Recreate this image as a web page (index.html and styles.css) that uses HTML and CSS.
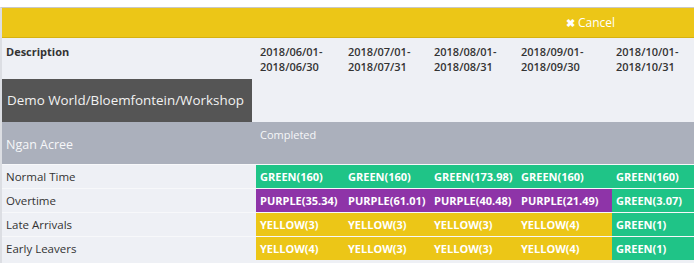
FILE: index.html
```html
<!DOCTYPE html>
<html lang="en">
<head>
  <meta charset="UTF-8">
  <meta name="viewport" content="width=device-width, initial-scale=1.0">
  <title>Timesheet Report</title>
  <link rel="stylesheet" href="styles.css">
</head>
<body>
  <div class="panel">
    <div class="toolbar">
      <span class="cancel"><span class="cancel-icon">&#10006;</span> Cancel</span>
    </div>
    <div class="report">
      <div class="row head-row">
        <div class="cell desc-head">Description</div>
        <div class="cell">2018/06/01-<br>2018/06/30</div>
        <div class="cell">2018/07/01-<br>2018/07/31</div>
        <div class="cell">2018/08/01-<br>2018/08/31</div>
        <div class="cell">2018/09/01-<br>2018/09/30</div>
        <div class="cell">2018/10/01-<br>2018/10/31</div>
      </div>
      <div class="row site-row">
        <div class="site">Demo World/Bloemfontein/Workshop</div>
      </div>
      <div class="row person-row">
        <div class="cell person">Ngan Acree</div>
        <div class="cell status">Completed</div>
      </div>
      <div class="row data-row">
        <div class="cell label">Normal Time</div>
        <div class="cell green">GREEN(160)</div>
        <div class="cell green">GREEN(160)</div>
        <div class="cell green">GREEN(173.98)</div>
        <div class="cell green">GREEN(160)</div>
        <div class="cell green">GREEN(160)</div>
      </div>
      <div class="row data-row">
        <div class="cell label">Overtime</div>
        <div class="cell purple">PURPLE(35.34)</div>
        <div class="cell purple">PURPLE(61.01)</div>
        <div class="cell purple">PURPLE(40.48)</div>
        <div class="cell purple">PURPLE(21.49)</div>
        <div class="cell green">GREEN(3.07)</div>
      </div>
      <div class="row data-row">
        <div class="cell label">Late Arrivals</div>
        <div class="cell yellow">YELLOW(3)</div>
        <div class="cell yellow">YELLOW(3)</div>
        <div class="cell yellow">YELLOW(3)</div>
        <div class="cell yellow">YELLOW(4)</div>
        <div class="cell green">GREEN(1)</div>
      </div>
      <div class="row data-row">
        <div class="cell label">Early Leavers</div>
        <div class="cell yellow">YELLOW(4)</div>
        <div class="cell yellow">YELLOW(3)</div>
        <div class="cell yellow">YELLOW(3)</div>
        <div class="cell yellow">YELLOW(4)</div>
        <div class="cell green">GREEN(1)</div>
      </div>
    </div>
  </div>
</body>
</html>
```

FILE: styles.css
```css
html, body {
  margin: 0;
  padding: 0;
  background: #fff;
  font-family: 'Open Sans', 'Liberation Sans', sans-serif;
  color: #333;
}

.panel {
  margin-top: 7px;
  border-top: 1px solid #c8c8c8;
  border-left: 2px solid #dcdee3;
  background: #eef0f5;
  height: 255px;
  overflow: hidden;
}

.toolbar {
  display: flex;
  justify-content: flex-end;
  align-items: center;
  height: 29px;
  padding-right: 79px;
  background: #ecc617;
  border-bottom: 1px solid #d6b210;
}

.cancel {
  color: #fff;
  font-size: 12px;
  cursor: pointer;
}

.cancel-icon {
  font-size: 11px;
  font-weight: 700;
}

/* report grid: description column + one column per month */
.row {
  display: grid;
  grid-template-columns: 254px 88px 86px 87px 95px 1fr;
  box-sizing: border-box;
  font-size: 11px;
}

.cell {
  padding: 0 4px;
  white-space: nowrap;
  overflow: hidden;
}

.head-row {
  height: 41px;
  font-weight: 600;
  line-height: 15px;
}

.head-row .cell {
  padding-top: 6px;
}

.head-row .desc-head {
  font-weight: 700;
}

.site-row {
  height: 43px;
}

.site {
  width: 250px;
  line-height: 43px;
  padding-left: 5px;
  box-sizing: border-box;
  background: #555;
  color: #f2f2f2;
  font-size: 13.4px;
  white-space: nowrap;
}

.person-row {
  height: 42px;
  background: #abb0bc;
  color: #f6f7f9;
}

.person-row .person {
  align-self: center;
  font-size: 12.5px;
  padding-top: 2px;
}

.person-row .status {
  padding-top: 5px;
}

.data-row {
  height: 24px;
  border-top: 1px solid #f7f8fa;
}

.data-row .cell {
  line-height: 23px;
}

.data-row .label {
  font-size: 11.5px;
  color: #333;
}

.green, .purple, .yellow {
  color: #fff;
  font-weight: 700;
}

.green { background: #1fc487; }
.purple { background: #8e34a8; }
.yellow { background: #ecc617; }
```
